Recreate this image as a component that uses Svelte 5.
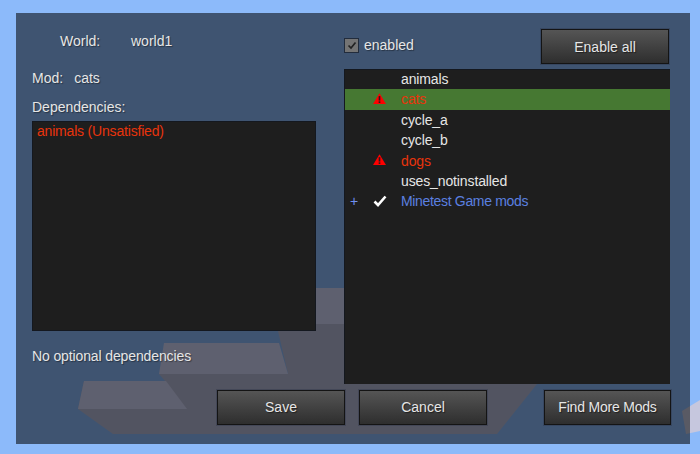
<script lang="ts">
    type Mod = { name: string, kind?: 'error' | 'pack', icon?: 'warn' | 'check', selected?: boolean }

    const mods: Mod[] = [
        { name: 'animals' },
        { name: 'cats', kind: 'error', icon: 'warn', selected: true },
        { name: 'cycle_a' },
        { name: 'cycle_b' },
        { name: 'dogs', kind: 'error', icon: 'warn' },
        { name: 'uses_notinstalled' },
        { name: 'Minetest Game mods', kind: 'pack', icon: 'check' }
    ];
</script>

<div class="screen">
    <!-- world blocks behind the dialog -->
    <svg class="world" width="700" height="454" viewBox="0 0 700 454">
        <polygon fill="#c6c7de" points="682,411 700,400 700,431 686,434" />
        <polygon fill="#b6bbd7" points="78,409 113,434 497,434 537,384 344,384 344,324 316,324 316,331 278,331 288,374 159,374 165,381 84,381" />
        <polygon fill="#d1d5f6" points="84,381 166,381 187,409 78,409" />
        <polygon fill="#d1d5f6" points="164,343 279,343 288,374 159,374" />
        <polygon fill="#d1d5f6" points="316,288 344,288 344,324 316,324" />
    </svg>

    <div class="dialog">
        <div class="left">
            <div class="world-line"><span>World:</span><span>world1</span></div>
            <div class="mod-line"><span>Mod:</span><span>cats</span></div>
            <div class="dep-title">Dependencies:</div>
            <div class="dep-list">animals (Unsatisfied)</div>
            <div class="optional">No optional dependencies</div>
        </div>

        <div class="right">
            <div class="top-row">
                <label class="check">
                    <span class="box">
                        <svg width="10" height="10" viewBox="0 0 10 10">
                            <path d="M1.5 5.5 L4 8 L8.5 2.5" fill="none" stroke="#222" stroke-width="1.7" />
                        </svg>
                    </span>
                    enabled
                </label>
                <button class="btn">Enable all</button>
            </div>

            <ul class="mods">
                {#each mods as mod}
                    <li class:selected={mod.selected} class:error={mod.kind === 'error'} class:pack={mod.kind === 'pack'}>
                        <span class="plus">{mod.kind === 'pack' ? '+' : ''}</span>
                        <span class="icon">
                            {#if mod.icon === 'warn'}
                                <svg class="warn" width="13" height="12" viewBox="0 0 14 13">
                                    <path d="M7 0.2 L14 12 L0 12 Z" fill="#ff0000" />
                                    <rect x="6.1" y="3.4" width="1.8" height="4.8" fill="#2a1a1a" />
                                    <rect x="6.1" y="9" width="1.8" height="1.8" fill="#2a1a1a" />
                                </svg>
                            {:else if mod.icon === 'check'}
                                <svg width="14" height="12" viewBox="0 0 14 12">
                                    <path d="M1.5 6.5 L5 10 L12.5 1.5" fill="none" stroke="#fff" stroke-width="2.6" />
                                </svg>
                            {/if}
                        </span>
                        <span class="name">{mod.name}</span>
                    </li>
                {/each}
            </ul>
        </div>

        <div class="bottom-row">
            <button class="btn">Save</button>
            <button class="btn">Cancel</button>
            <button class="btn more">Find More Mods</button>
        </div>
    </div>
</div>

<style>
:global(body) {
    margin: 0;
    background: #8cbafa;
}

.screen {
    position: relative;
    width: 700px;
    height: 454px;
    box-sizing: border-box;
    padding: 13px 10px 10px 16px;
    overflow: hidden;
    font-family: "Liberation Sans", Arial, sans-serif;
    font-size: 14px;
    color: #e6e6e6;
    background: #8cbafa;
}

.world {
    position: absolute;
    left: 0;
    top: 0;
}

.dialog {
    position: relative;
    width: 674px;
    height: 431px;
    box-sizing: border-box;
    background: rgba(0, 0, 0, 0.55);
    display: grid;
    grid-template-columns: 328px 346px;
    grid-template-rows: 371px 35px;
}

.left {
    padding: 0 0 0 16px;
    text-shadow: 1px 1px 1px rgba(0, 0, 0, 0.4);
}

.world-line {
    display: flex;
    padding: 20px 0 0 28px;
    line-height: 16px;
}

.world-line span:first-child {
    width: 71px;
}

.mod-line {
    display: flex;
    gap: 11px;
    margin-top: 21px;
    line-height: 16px;
}

.dep-title {
    margin-top: 13px;
    line-height: 16px;
}

.dep-list {
    margin-top: 6px;
    width: 284px;
    height: 210px;
    box-sizing: border-box;
    padding: 1px 4px;
    background: #1e1e1e;
    border: 1px solid #14181f;
    color: #e8340c;
    line-height: 16px;
    letter-spacing: -0.19px;
    text-shadow: none;
}

.optional {
    margin-top: 17px;
    line-height: 16px;
    letter-spacing: -0.12px;
}

.right {
    width: 326px;
}

.top-row {
    display: flex;
    justify-content: space-between;
    padding: 16px 1px 0 0;
    height: 40px;
}

.check {
    display: flex;
    align-items: center;
    gap: 5px;
    height: 32px;
    text-shadow: 1px 1px 1px rgba(0, 0, 0, 0.4);
}

.box {
    width: 15px;
    height: 15px;
    box-sizing: border-box;
    border: 1px solid #222c3c;
    background: #747474;
    display: flex;
    align-items: center;
    justify-content: center;
}

.btn {
    width: 128px;
    height: 35px;
    padding: 0;
    box-sizing: border-box;
    border: 1px solid #141414;
    box-shadow: 0 0 0 1px rgba(40, 50, 70, 0.35);
    border-radius: 0;
    background: linear-gradient(#555555, #2e2e2e);
    color: #e6e6e6;
    font-family: inherit;
    font-size: 14px;
    text-shadow: 1px 1px 1px rgba(0, 0, 0, 0.5);
}

.mods {
    list-style: none;
    margin: 0;
    padding: 0;
    width: 326px;
    height: 315px;
    box-sizing: border-box;
    background: #1e1e1e;
    border-top: 1px solid #14181f;
    border-left: 1px solid #14181f;
}

li {
    display: flex;
    align-items: center;
    height: 20.4px;
    letter-spacing: -0.12px;
}

li:first-child {
    margin-top: -1.2px;
}

li.selected {
    background: #467832;
}

li.error {
    color: #e8340c;
}

li.pack {
    color: #5b80e0;
    letter-spacing: -0.33px;
}

.plus {
    width: 24px;
    padding-left: 5px;
    box-sizing: border-box;
    color: #6f90f0;
}

.icon {
    width: 32px;
    height: 14px;
    display: flex;
    align-items: center;
    padding-left: 4px;
    box-sizing: border-box;
}

.warn {
    margin-top: -1px;
}

.bottom-row {
    grid-column: 1 / 3;
    display: flex;
    padding-left: 201px;
    gap: 14px;
    align-items: flex-start;
    margin-top: 6px;
}

.bottom-row .btn {
    padding-bottom: 1px;
}

.more {
    width: 127px;
    margin-left: 43px;
    letter-spacing: -0.2px;
}
</style>
